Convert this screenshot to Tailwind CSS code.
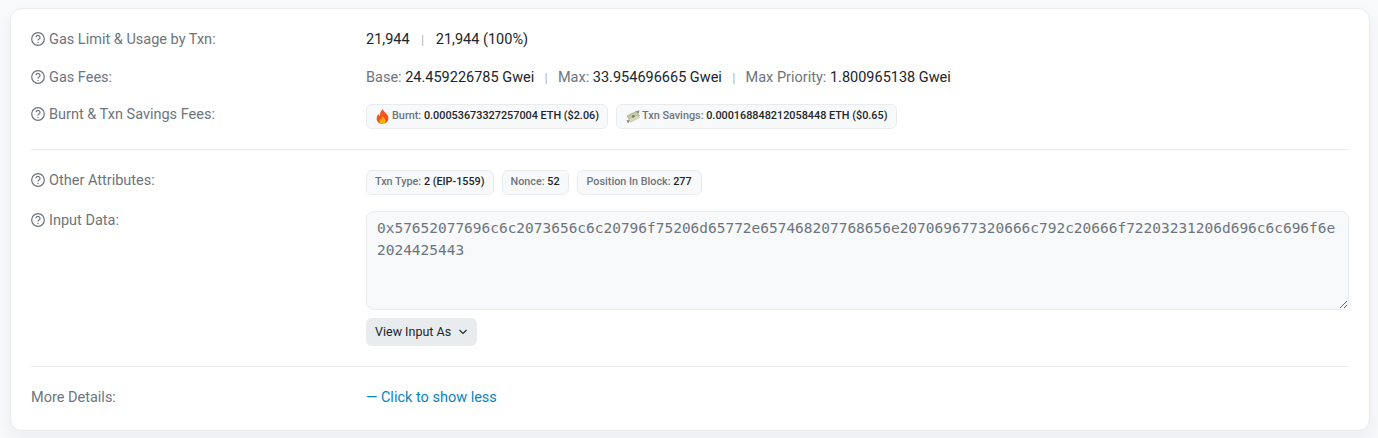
<!DOCTYPE html>
<html>
<head>
<meta charset="utf-8">
<script src="https://cdn.jsdelivr.net/npm/@tailwindcss/browser@4"></script>
</head>
<body class="m-0 h-[438px] w-[1378px] overflow-hidden bg-[#f8f9fa] font-['Roboto',sans-serif] text-[14.5px] text-[#212529]">
<div class="ml-[10px] mt-[8px] h-[423px] w-[1360px] rounded-[12px] border border-[#e9ecef] bg-white px-[20px] pt-[20px] shadow-[0_8px_16px_rgba(189,197,209,0.2)]">

  <div class="flex h-[22px] items-center">
    <div class="flex w-[335px] items-center gap-[4px] text-[#6c757d]">
      <svg class="-mt-[2px] h-[14px] w-[14px]" viewBox="0 0 14 14" fill="none" stroke="#6c757d" stroke-width="1.2"><circle cx="7" cy="7" r="6.3"/><path d="M5 5.300a2 2 0 1 1 3 1.800c-.7.400-1 .8-1 1.400"/><path d="M7 10v1"/></svg>
      <span>Gas Limit &amp; Usage by Txn:</span>
    </div>
    <div class="flex items-center">
      <span>21,944</span><span class="mx-[11.500px] text-[13px] text-[#adb5bd]">|</span><span>21,944 (100%)</span>
    </div>
  </div>

  <div class="mt-[16px] flex h-[22px] items-center">
    <div class="flex w-[335px] items-center gap-[4px] text-[#6c757d]">
      <svg class="-mt-[2px] h-[14px] w-[14px]" viewBox="0 0 14 14" fill="none" stroke="#6c757d" stroke-width="1.2"><circle cx="7" cy="7" r="6.3"/><path d="M5 5.300a2 2 0 1 1 3 1.800c-.7.400-1 .8-1 1.400"/><path d="M7 10v1"/></svg>
      <span>Gas Fees:</span>
    </div>
    <div class="flex items-center">
      <span class="text-[#6c757d]">Base:&nbsp;</span><span>24.459226785 Gwei</span>
      <span class="mx-[10.250px] text-[13px] text-[#adb5bd]">|</span>
      <span class="text-[#6c757d]">Max:&nbsp;</span><span>33.954696665 Gwei</span>
      <span class="mx-[10.250px] text-[13px] text-[#adb5bd]">|</span>
      <span class="text-[#6c757d]">Max Priority:&nbsp;</span><span>1.800965138 Gwei</span>
    </div>
  </div>

  <div class="mt-[15px] flex items-start">
    <div class="flex h-[22px] w-[335px] items-center gap-[4px] text-[#6c757d]">
      <svg class="-mt-[2px] h-[14px] w-[14px]" viewBox="0 0 14 14" fill="none" stroke="#6c757d" stroke-width="1.2"><circle cx="7" cy="7" r="6.3"/><path d="M5 5.300a2 2 0 1 1 3 1.800c-.7.400-1 .8-1 1.400"/><path d="M7 10v1"/></svg>
      <span>Burnt &amp; Txn Savings Fees:</span>
    </div>
    <div class="flex gap-[8px] text-[10.850px] font-medium">
      <div class="flex h-[25px] items-center rounded-[6px] border border-[#e9ecef] bg-[#f8f9fa] pl-[9px] pr-[8px]">
        <svg class="mr-[3px] h-[15px] w-[13px]" viewBox="0 0 13 15"><path d="M6.800.3c.5 2.400 3.300 3.600 4.900 6.200 1.700 3.200.3 8-5.100 8.300C1.800 14.800-.4 10.800 1.100 7.200c.4-1 1-1.800 1.500-2.300.2 1.200.7 1.900 1.400 2.200C3.700 4.600 4.900 1.900 6.800.3z" fill="#f4511e"/><path d="M6.700 7c.3 1.500 2.800 2.600 2.800 4.900 0 1.800-1.300 2.900-3 2.900s-3-1.100-3-2.800c0-1 .5-1.700 1-2.200.2.600.5 1 1 1.100C6 9.400 6 8 6.700 7z" fill="#ffb300"/></svg>
        <span class="text-[#6c757d]">Burnt:&nbsp;</span><span>0.00053673327257004 ETH ($2.06)</span>
      </div>
      <div class="flex h-[25px] items-center rounded-[6px] border border-[#e9ecef] bg-[#f8f9fa] px-[9px]">
        <svg class="mr-[1px] h-[14px] w-[15px]" viewBox="0 0 15 14"><path d="M1 6l9-4.500 3.500 4-9 5z" fill="#c5cca6" stroke="#7b8c62" stroke-width=".5"/><path d="M2.500 9l9-4 2 2.500-8.500 4.500z" fill="#ded9bd" stroke="#98a27e" stroke-width=".4"/><circle cx="7.300" cy="6.300" r="1.400" fill="#6f8455"/><path d="M9.500 1.500l4-1.300-.8 3.300zM.5 10l3.500.3-2 3.200z" fill="#8f8a7c"/></svg>
        <span class="text-[#6c757d]">Txn Savings:&nbsp;</span><span>0.000168848212058448 ETH ($0.65)</span>
      </div>
    </div>
  </div>

  <hr class="mt-[20px] border-0 border-t border-[#e9ecef]">

  <div class="mt-[20px] flex items-start">
    <div class="flex h-[22px] w-[335px] items-center gap-[4px] text-[#6c757d]">
      <svg class="-mt-[2px] h-[14px] w-[14px]" viewBox="0 0 14 14" fill="none" stroke="#6c757d" stroke-width="1.2"><circle cx="7" cy="7" r="6.3"/><path d="M5 5.300a2 2 0 1 1 3 1.800c-.7.400-1 .8-1 1.400"/><path d="M7 10v1"/></svg>
      <span>Other Attributes:</span>
    </div>
    <div class="flex gap-[8px] text-[10.800px] font-medium">
      <div class="flex h-[25px] items-center rounded-[6px] border border-[#e9ecef] bg-[#f8f9fa] px-[8px]"><span class="text-[#6c757d]">Txn Type:&nbsp;</span><span>2 (EIP-1559)</span></div>
      <div class="flex h-[25px] items-center rounded-[6px] border border-[#e9ecef] bg-[#f8f9fa] px-[8px]"><span class="text-[#6c757d]">Nonce:&nbsp;</span><span>52</span></div>
      <div class="flex h-[25px] items-center rounded-[6px] border border-[#e9ecef] bg-[#f8f9fa] px-[9px]"><span class="text-[#6c757d]">Position In Block:&nbsp;</span><span>277</span></div>
    </div>
  </div>

  <div class="mt-[16px] flex items-start">
    <div class="flex h-[20px] w-[335px] items-center gap-[4px] text-[#6c757d]">
      <svg class="-mt-[2px] h-[14px] w-[14px]" viewBox="0 0 14 14" fill="none" stroke="#6c757d" stroke-width="1.2"><circle cx="7" cy="7" r="6.3"/><path d="M5 5.300a2 2 0 1 1 3 1.800c-.7.400-1 .8-1 1.400"/><path d="M7 10v1"/></svg>
      <span>Input Data:</span>
    </div>
    <div class="w-[983px]">
      <textarea readonly class="block h-[99px] w-full resize-y rounded-[8px] border border-[#e9ecef] bg-[#f8f9fa] px-[10px] py-[5px] font-['DejaVu_Sans_Mono',monospace] text-[14.480px] leading-[22px] text-[#6c757d] outline-none">0x57652077696c6c2073656c6c20796f75206d65772e657468207768656e207069677320666c792c20666f72203231206d696c6c696f6e2024425443</textarea>
      <button class="mt-[8px] flex h-[28px] w-[111px] items-center rounded-[6px] bg-[#e9ecef] pl-[9px] text-[12.500px] text-[#212529]">
        View Input As
        <svg class="ml-[6px] h-[8px] w-[12px]" viewBox="0 0 12 8" fill="none" stroke="#212529" stroke-width="1.100"><path d="M2.500 2l3.500 3.500L9.500 2"/></svg>
      </button>
    </div>
  </div>

  <hr class="mt-[20px] border-0 border-t border-[#e9ecef]">

  <div class="mt-[21px] flex h-[20px] items-center">
    <div class="w-[335px] text-[#6c757d]">More Details:</div>
    <a class="text-[#0784c3]">— Click to show less</a>
  </div>
</div>
</body>
</html>
